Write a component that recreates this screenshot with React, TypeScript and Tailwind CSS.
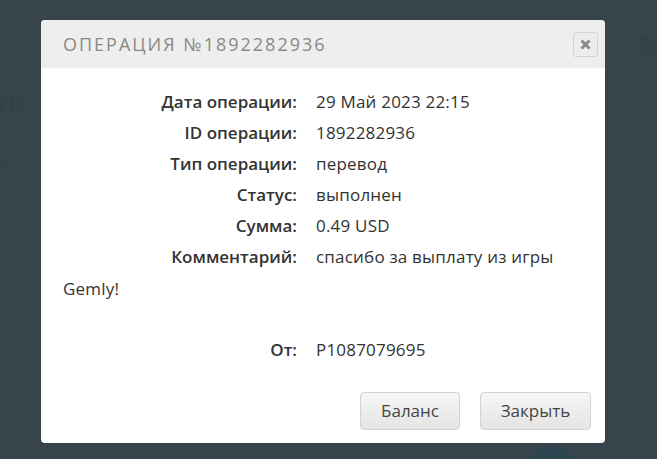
const rows: [string, string][] = [
  ["Дата операции:", "29 Май 2023 22:15"],
  ["ID операции:", "1892282936"],
  ["Тип операции:", "перевод"],
  ["Статус:", "выполнен"],
  ["Сумма:", "0.49 USD"],
];

function Row({ label, children }: { label: string; children: React.ReactNode }) {
  return (
    <div>
      <span className="inline-block w-[234px] text-right font-semibold">{label}</span>
      <span className="ml-[19px] tracking-[0.2px]">{children}</span>
    </div>
  );
}

export default function App() {
  return (
    <div className="relative h-[459px] w-[657px] overflow-hidden bg-[#37444c] font-['Open_Sans',sans-serif]">
      {/* faint page behind the overlay */}
      <div className="absolute left-[-4px] top-[89px] text-[21px] tracking-[1px] text-[#33414a]">TIC</div>
      <div className="absolute left-[638px] top-[28px] text-[24px] text-[#33414a]">BC</div>
      <div className="absolute left-[-6px] top-[146px] text-[22px] text-[#33414a]">y</div>
      <div className="absolute left-[522px] top-[447px] h-[60px] w-[60px] rounded-full bg-[#2e4551]" />

      <div className="absolute left-[41px] top-[20px] w-[564px] overflow-hidden rounded-[4px] bg-white">
        {/* title bar */}
        <div className="flex h-[48px] items-center justify-between bg-[#eeeeee] pl-[22px] pr-[7px]">
          <span className="text-[18px] tracking-[2px] text-[#8a8886]">ОПЕРАЦИЯ №1892282936</span>
          <button className="flex h-[25px] w-[25px] items-center justify-center rounded-[3px] border border-[#d3d3d3] bg-[#ededed]">
            <svg width="11" height="11" viewBox="0 0 11 11">
              <path d="M1.5 1.5 L9.5 9.5 M9.5 1.5 L1.5 9.5" stroke="#8a8a8a" strokeWidth="3" strokeLinecap="butt" />
            </svg>
          </button>
        </div>

        {/* details */}
        <div className="px-[22px] pt-[18px] text-[17px] leading-[31px] text-[#333]">
          {rows.map(([label, value]) => (
            <Row key={label} label={label}>
              {value}
            </Row>
          ))}
          <div className="leading-[32px]">
            <Row label="Комментарий:">спасибо за выплату из игры Gemly!</Row>
          </div>
          <div className="h-[29px]" />
          <Row label="От:">P1087079695</Row>
        </div>

        {/* buttons */}
        <div className="flex justify-end gap-[20px] px-[14px] pb-[13px] pt-[27px]">
          <button className="h-[38px] w-[100px] rounded-[4px] border border-[#d3d3d3] bg-gradient-to-b from-[#f6f6f6] to-[#e4e4e4] text-[17px] text-[#454545]">
            Баланс
          </button>
          <button className="h-[38px] w-[111px] rounded-[4px] border border-[#d3d3d3] bg-gradient-to-b from-[#f6f6f6] to-[#e4e4e4] text-[17px] text-[#454545]">
            Закрыть
          </button>
        </div>
      </div>
    </div>
  );
}
